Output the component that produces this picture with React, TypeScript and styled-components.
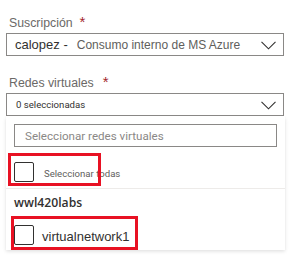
import React from "react";
import styled, { createGlobalStyle } from "styled-components";

const Global = createGlobalStyle`
  html, body { margin: 0; padding: 0; background: #ffffff; }
  body { font-family: "Liberation Sans", Arial, sans-serif; color: #323130; }
  * { box-sizing: border-box; }
`;

const Page = styled.div`
  width: 290px;
  height: 258px;
  padding: 15px 0 0 6px;
  display: flex;
  flex-direction: column;
  overflow: hidden;
`;

const Field = styled.div<{ $gap?: number }>`
  display: flex;
  flex-direction: column;
  width: 278px;
  margin-top: ${(p) => p.$gap ?? 0}px;
`;

const Label = styled.div`
  display: flex;
  align-items: flex-start;
  height: 16px;
  line-height: 16px;
  padding-left: 3px;
  font-size: 12.3px;
  color: #6b6967;
  margin-bottom: 2px;
`;

const Required = styled.span<{ $gap: number }>`
  color: #a4262c;
  font-size: 15px;
  line-height: 14px;
  margin-left: ${(p) => p.$gap}px;
`;

const Select = styled.div`
  height: 23px;
  border: 1px solid #8a8886;
  display: flex;
  align-items: center;
  padding: 0 7px 0 8px;
`;

const SelectText = styled.div`
  flex: 1;
  display: flex;
  align-items: baseline;
  white-space: nowrap;
  overflow: hidden;
`;

const Strong = styled.span`
  font-size: 13px;
  color: #323130;
`;

const Muted = styled.span`
  font-size: 12px;
  color: #605e5c;
  margin-left: 9px;
`;

const SmallValue = styled.span`
  font-family: Roboto, "Liberation Sans", sans-serif;
  font-size: 9.6px;
  color: #323130;
  margin-left: 1px;
`;

const Chevron = () => (
  <svg width="15" height="9" viewBox="0 0 15 9" style={{ marginTop: 2 }}>
    <polyline points="0.5,0.8 7.5,7.8 14.5,0.8" fill="none" stroke="#323130" strokeWidth="1.1" />
  </svg>
);

const Panel = styled.div`
  width: 279px;
  background: #ffffff;
  box-shadow: 0 1.6px 3.6px rgba(0, 0, 0, 0.13), 0 0.3px 0.9px rgba(0, 0, 0, 0.11);
  display: flex;
  flex-direction: column;
`;

const SearchArea = styled.div`
  padding: 8px 8px 0 8px;
`;

const Search = styled.div`
  height: 23px;
  border: 1px solid #8a8886;
  display: flex;
  align-items: center;
  padding-left: 10px;
  font-family: Roboto, "Liberation Sans", sans-serif;
  font-size: 11.6px;
  color: #8a8886;
`;

const Row = styled.div<{ $pt: number; $pb: number; $gap: number }>`
  position: relative;
  display: flex;
  align-items: center;
  padding: ${(p) => p.$pt}px 8px ${(p) => p.$pb}px 8px;
  column-gap: ${(p) => p.$gap}px;
`;

const Box = styled.div`
  width: 20px;
  height: 20px;
  border: 1px solid #323130;
  border-radius: 2px;
  flex: none;
`;

const AllText = styled.span`
  font-family: Roboto, "Liberation Sans", sans-serif;
  font-size: 9.6px;
  color: #605e5c;
  position: relative;
  top: 1px;
`;

const ItemText = styled.span`
  font-size: 13px;
  color: #323130;
  position: relative;
  top: 1px;
`;

const Group = styled.div`
  border-top: 1px solid #edebe9;
  display: flex;
  flex-direction: column;
`;

const GroupHeader = styled.div`
  padding: 5px 8px 0 8px;
  height: 27px;
  line-height: 18px;
  font-family: "Open Sans", "Liberation Sans", sans-serif;
  font-size: 12.2px;
  font-weight: 600;
  color: #323130;
`;

const Highlight = styled.div<{ $l: number; $t: number; $w: number; $h: number }>`
  position: absolute;
  left: ${(p) => p.$l}px;
  top: ${(p) => p.$t}px;
  width: ${(p) => p.$w}px;
  height: ${(p) => p.$h}px;
  border: 3px solid #e81123;
  pointer-events: none;
`;

export default function App() {
  return (
    <>
      <Global />
      <Page>
        <Field>
          <Label>
            Suscripción<Required $gap={7}>*</Required>
          </Label>
          <Select>
            <SelectText>
              <Strong>calopez -</Strong>
              <Muted>Consumo interno de MS Azure</Muted>
            </SelectText>
            <Chevron />
          </Select>
        </Field>
        <Field $gap={19}>
          <Label>
            Redes virtuales<Required $gap={9}>*</Required>
          </Label>
          <Select>
            <SelectText>
              <SmallValue>0 seleccionadas</SmallValue>
            </SelectText>
            <Chevron />
          </Select>
          <Panel>
            <SearchArea>
              <Search>Seleccionar redes virtuales</Search>
            </SearchArea>
            <Row $pt={15} $pb={6} $gap={10}>
              <Box />
              <AllText>Seleccionar todas</AllText>
              <Highlight $l={2} $t={6} $w={93} $h={33} />
            </Row>
            <Group>
              <GroupHeader>wwl420labs</GroupHeader>
              <Row $pt={9} $pb={5} $gap={8}>
                <Box />
                <ItemText>virtualnetwork1</ItemText>
                <Highlight $l={5} $t={0} $w={127} $h={34} />
              </Row>
            </Group>
          </Panel>
        </Field>
      </Page>
    </>
  );
}
